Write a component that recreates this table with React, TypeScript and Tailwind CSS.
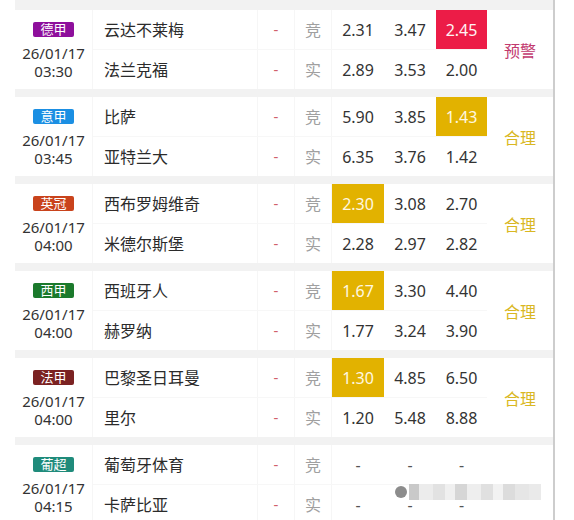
import React from "react";

type Hl = "red" | "gold" | null;
type Match = {
  league: string;
  badge: string;
  date: string;
  time: string;
  home: string;
  away: string;
  jing: string[];
  shi: string[];
  hl: [number, Hl];
  result: string;
  resultColor: string;
};

const matches: Match[] = [
  { league: "德甲", badge: "bg-[#8e0f9c]", date: "26/01/17", time: "03:30", home: "云达不莱梅", away: "法兰克福", jing: ["2.31", "3.47", "2.45"], shi: ["2.89", "3.53", "2.00"], hl: [2, "red"], result: "预警", resultColor: "text-[#c23a6e]" },
  { league: "意甲", badge: "bg-[#1b8fe3]", date: "26/01/17", time: "03:45", home: "比萨", away: "亚特兰大", jing: ["5.90", "3.85", "1.43"], shi: ["6.35", "3.76", "1.42"], hl: [2, "gold"], result: "合理", resultColor: "text-[#d9b722]" },
  { league: "英冠", badge: "bg-[#c9431c]", date: "26/01/17", time: "04:00", home: "西布罗姆维奇", away: "米德尔斯堡", jing: ["2.30", "3.08", "2.70"], shi: ["2.28", "2.97", "2.82"], hl: [0, "gold"], result: "合理", resultColor: "text-[#d9b722]" },
  { league: "西甲", badge: "bg-[#1b7a2c]", date: "26/01/17", time: "04:00", home: "西班牙人", away: "赫罗纳", jing: ["1.67", "3.30", "4.40"], shi: ["1.77", "3.24", "3.90"], hl: [0, "gold"], result: "合理", resultColor: "text-[#d9b722]" },
  { league: "法甲", badge: "bg-[#7b2222]", date: "26/01/17", time: "04:00", home: "巴黎圣日耳曼", away: "里尔", jing: ["1.30", "4.85", "6.50"], shi: ["1.20", "5.48", "8.88"], hl: [0, "gold"], result: "合理", resultColor: "text-[#d9b722]" },
  { league: "葡超", badge: "bg-[#1f8b7b]", date: "26/01/17", time: "04:15", home: "葡萄牙体育", away: "卡萨比亚", jing: ["-", "-", "-"], shi: ["-", "-", "-"], hl: [0, null], result: "", resultColor: "" },
];

const oddW = ["w-[52px]", "w-[52px]", "w-[51px]"];

function Row({ name, type, odds, hl, first }: { name: string; type: string; odds: string[]; hl: [number, Hl] | null; first: boolean }) {
  return (
    <div className={`flex ${first ? "h-[40px] border-b border-[#f7f7f7]" : "h-[39px]"}`}>
      <div className="w-[165px] pl-[11px] flex items-center text-[16px] text-[#2b2b2b] border-r border-[#f6f6f6]">{name}</div>
      <div className="w-[37px] flex items-center justify-center text-[15px] text-[#d0606a] border-r border-[#f6f6f6]">-</div>
      <div className="w-[37px] flex items-center justify-center text-[16px] text-[#a0a0a0] border-r border-[#f6f6f6]">{type}</div>
      {odds.map((o, i) => {
        const h = hl && hl[0] === i ? hl[1] : null;
        const bg = h === "red" ? "bg-[#ec1c47] text-[#fff3f3]" : h === "gold" ? "bg-[#e2b200] text-[#fff8e0]" : o === "-" ? "text-[#555]" : "text-[#333]";
        return (
          <div key={i} className={`${oddW[i]} flex items-center justify-center text-[16px] ${bg}`}>
            {o}
          </div>
        );
      })}
    </div>
  );
}

export default function App() {
  return (
    <div
      className="w-[574px] h-[520px] overflow-hidden bg-white relative"
      style={{ fontFamily: '"Noto Sans", "Noto Sans CJK SC", sans-serif' }}
    >
      <div className="flex">
        <div className="ml-[15px] w-[538px]">
          {matches.map((m, idx) => (
            <div key={idx}>
              <div className={`${idx === 0 ? "h-[10px]" : "h-[8px]"} bg-[#f2f2f2]`} />
              <div className="flex">
                <div className="w-[78px] flex flex-col items-center justify-center border-r border-[#f6f6f6] pt-[2px]">
                  <div className={`${m.badge} text-white text-[13px] leading-[15px] h-[15px] w-[41px] text-center rounded-[2px] mb-[7px]`}>
                    {m.league}
                  </div>
                  <div className="text-[15px] leading-[18px] text-[#333] text-center whitespace-pre-line">
                    {`${m.date}\n${m.time}`}
                  </div>
                </div>
                <div className="flex flex-col">
                  <Row name={m.home} type="竞" odds={m.jing} hl={m.hl} first />
                  <Row name={m.away} type="实" odds={m.shi} hl={null} first={false} />
                </div>
                <div className={`w-[66px] flex items-center justify-center text-[16px] pt-[2px] ${m.resultColor}`}>
                  {m.result}
                </div>
              </div>
            </div>
          ))}
        </div>
        <div className="w-[2px] h-[520px] bg-[#cdcdcd]" />
      </div>

      {/* blurred watermark */}
      <div className="absolute left-[395px] top-[484px] flex items-center">
        <div className="w-[12px] h-[12px] rounded-full bg-[#8c8c8c]" />
        <div className="ml-[2px] flex h-[16px]">
          <div className="w-[10px] bg-[#c9c9c9]" />
          <div className="w-[14px] bg-[#ececec]" />
          <div className="w-[12px] bg-[#e2e2e2]" />
          <div className="w-[10px] bg-[#f0f0f0]" />
          <div className="w-[12px] bg-[#d6d6d6]" />
          <div className="w-[14px] bg-[#eeeeee]" />
          <div className="w-[12px] bg-[#e0e0e0]" />
          <div className="w-[10px] bg-[#f2f2f2]" />
          <div className="w-[12px] bg-[#dcdcdc]" />
          <div className="w-[14px] bg-[#e6e6e6]" />
          <div className="w-[12px] bg-[#eaeaea]" />
        </div>
      </div>
    </div>
  );
}
